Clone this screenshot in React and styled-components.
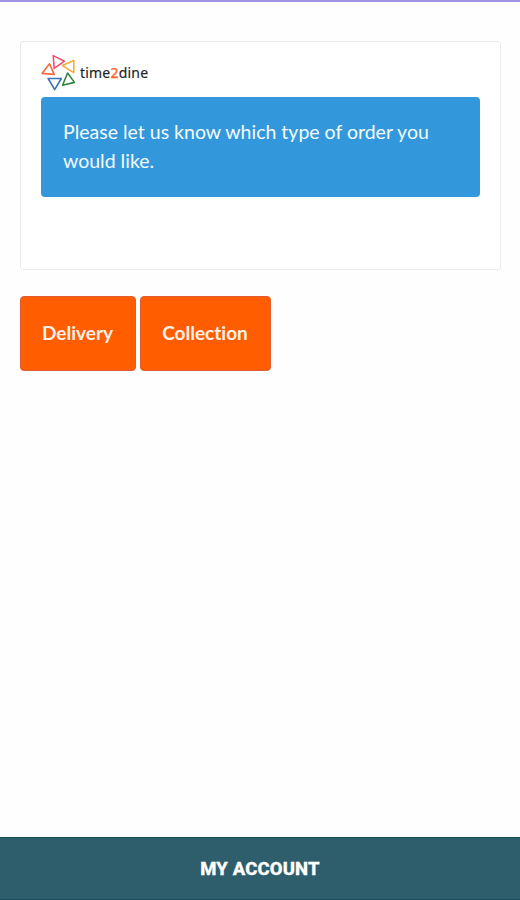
import React from "react";
import styled, { createGlobalStyle } from "styled-components";

const GlobalStyle = createGlobalStyle`
  * { box-sizing: border-box; }
  body { margin: 0; background: #fefefe; font-family: Lato, "Liberation Sans", sans-serif; }
`;

const Screen = styled.div`
  display: flex;
  flex-direction: column;
  height: 900px;
  border-top: 2px solid #a294e2;
`;

const Content = styled.main`
  flex: 1;
  padding: 39px 19px 0 20px;
`;

const Card = styled.section`
  height: 229px;
  padding: 12px 20px 0;
  border: 1px solid #ebebeb;
  border-radius: 3px;
  background: #fff;
`;

const Brand = styled.div`
  display: flex;
  align-items: center;
  gap: 3px;
  height: 37px;
  margin-bottom: 6px;
`;

const BrandMark = styled.svg`
  width: 36px;
  height: 37px;
  flex: none;
  fill: none;
  stroke-width: 1.6;
  stroke-linejoin: round;
`;

const BrandName = styled.span`
  font: 400 14px/20px "Noto Sans", sans-serif;
  letter-spacing: 0.2px;
  color: #222;
  -webkit-text-stroke: 0.15px currentColor;
`;

const Accent = styled.span`
  color: #fb6534;
  -webkit-text-stroke: 0.4px currentColor;
`;

const Notice = styled.p`
  margin: 0;
  height: 100px;
  padding: 20px 22px;
  border-radius: 4px;
  background: #3398db;
  color: #f5fbff;
  font-size: 19.5px;
  line-height: 29px;
`;

const Choices = styled.div`
  display: flex;
  gap: 4px;
  margin-top: 26px;
`;

const ChoiceButton = styled.button`
  width: ${({ $width }) => $width}px;
  height: 75px;
  padding: 0 1px 2px 0;
  border: 1px solid #df5c30;
  border-radius: 4px;
  background: #ff5d00;
  color: #fff1e9;
  font: 700 19px/28px Lato, sans-serif;
  font-variant-ligatures: none;
`;

const AccountBar = styled.button`
  height: 63px;
  padding: 0;
  border: 0;
  border-top: 1px solid #194c5b;
  border-bottom: 1px solid #194c5b;
  background: #2e5d6b;
  color: #fff;
  font: 800 18.5px/24px Roboto, sans-serif;
  letter-spacing: 0.15px;
  -webkit-text-stroke: 0.3px currentColor;
`;

const triangles = [
  { color: "#ef5075", d: "M12.2 1.6 23.4 7.2 13.2 14.4Z" },
  { color: "#f5ad35", d: "M21.4 11.6 32.8 6.4v12.2Z" },
  { color: "#318443", d: "M26.6 19 33.4 28.4 21.6 31.2Z" },
  { color: "#3975b5", d: "M7.1 24.5h13.2L13.7 35.6Z" },
  { color: "#f36b3e", d: "M8.5 9.8 13.2 20.4 1 19.4Z" },
];

export default function App() {
  return (
    <>
      <GlobalStyle />
      <Screen>
        <Content>
          <Card>
            <Brand>
              <BrandMark viewBox="0 0 36 37" aria-hidden="true">
                {triangles.map(({ color, d }) => (
                  <path key={color} d={d} stroke={color} />
                ))}
              </BrandMark>
              <BrandName>
                time<Accent>2</Accent>dine
              </BrandName>
            </Brand>
            <Notice>Please let us know which type of order you would like.</Notice>
          </Card>
          <Choices>
            <ChoiceButton $width={116}>Delivery</ChoiceButton>
            <ChoiceButton $width={131}>Collection</ChoiceButton>
          </Choices>
        </Content>
        <AccountBar>MY ACCOUNT</AccountBar>
      </Screen>
    </>
  );
}
